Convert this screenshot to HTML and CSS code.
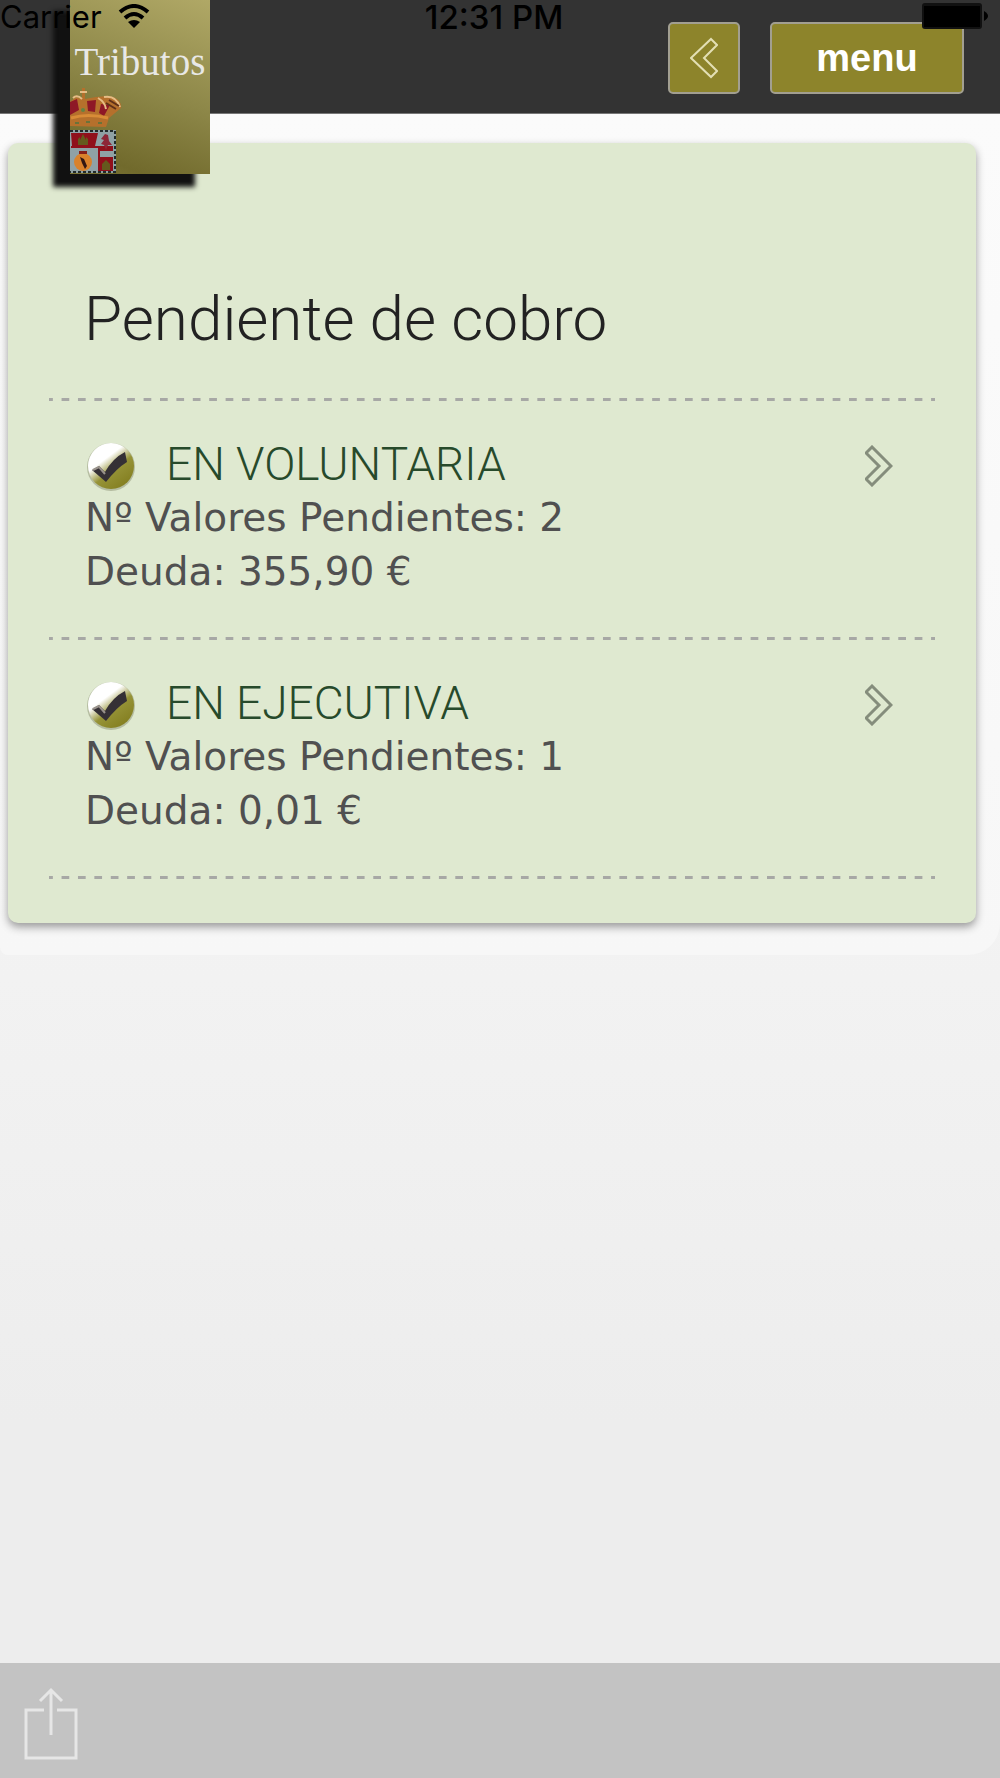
FILE: index.html
```
<!DOCTYPE html>
<html lang="es">
<head>
  <meta charset="UTF-8" />
  <title>Tributos</title>
  <meta name="viewport" content="width=device-width, initial-scale=1.0" />
  <link rel="stylesheet" href="styles.css">
</head>
<body>

  <!-- STATUS BAR -->
  <div class="statusbar">
    <span class="carrier">Carrier
      <svg class="wifi" viewBox="0 0 32 24" width="32" height="24">
        <path d="M2 8 Q16 -4 30 8" fill="none" stroke="#000" stroke-width="4"/>
        <path d="M7 14 Q16 6 25 14" fill="none" stroke="#000" stroke-width="4"/>
        <path d="M10 18 Q16 14 22 18 L16 24 Z"/>
      </svg>
    </span>
    <span class="time">12:31 PM</span>
    <svg class="battery" viewBox="0 0 66 26" width="66" height="26">
      <rect x="0" y="0" width="60" height="26" rx="3" fill="#111"/>
      <rect x="2" y="3" width="56" height="21"/>
      <path d="M62 8 Q70 13 62 18 Z"/>
    </svg>
  </div>

  <!-- HEADER -->
  <header class="header">
    <a class="logo" href="#">
      <span>Tributos</span>
      <svg class="escudo" viewBox="0 0 54 90" width="54" height="90">
        <!-- corona -->
        <path d="M0 42 V18 L6 13 L12 15 V4 H15 V15 L26 13 L38 12 Q52 14 51 24 L39 34 L36 43 Z" fill="#b5702c"/>
        <path d="M0 18 L7 15 L9 26 L0 31 Z M17 17 L26 16 L25 28 L18 27 Z M31 20 L40 21 L34 32 L29 29 Z" fill="#8e1826"/>
        <path d="M10 8 H17 M3 14 Q7 10 12 15 M28 14 Q35 18 36 25 M34 13 Q46 11 50 23" fill="none" stroke="#e6bd85" stroke-width="2"/>
        <path d="M36 19 L46 25 M39 16 L49 22" stroke="#603018" stroke-width="2"/>
        <path d="M1 34 Q18 29 38 34" fill="none" stroke="#d88c37" stroke-width="3"/>
        <circle cx="13" cy="26" r="2" fill="#628443"/>
        <path d="M5 39 h4 M16 38 h4 M28 39 h4" stroke="#69733a" stroke-width="2"/>
        <!-- cuarteles -->
        <rect x="0" y="46" width="46" height="43" fill="#8fa1a5"/>
        <path d="M0 47 H45 V88 H0" fill="none" stroke="#222b2b" stroke-width="2" stroke-dasharray="3 2"/>
        <path d="M1 49 H28 L25 62 H2 Z M29 62 H43 V87 H29 Z" fill="#90101b"/>
        <path d="M1 63 H29 V87" fill="none" stroke="#90101b" stroke-width="2"/>
        <path d="M8 61 V55 L10 53 V56 L13 50 L16 56 V53 L18 55 V61 Z M32 86 V80 L36 76 L40 80 V86 Z" fill="#65591d"/>
        <path d="M31 55 L35 50 L38 51 L39 57 L42 61 L38 61 L36 66 L34 61 L31 60 L34 56 Z" fill="#8d2637"/>
        <path d="M30 67 H43 V73 H30 Z" fill="#8fa1a5"/>
        <ellipse cx="13" cy="78" rx="9" ry="9" fill="#d9822b"/>
        <path d="M9 67 h8 v3 h-8 Z" fill="#862019"/>
        <path d="M10 73 L14 75 L17 82 L15 85 L12 79 Z" fill="#321712"/>
      </svg>
    </a>
    <button class="btn btn-back" aria-label="Volver">
      <svg viewBox="0 0 28 42" width="28" height="42">
        <path d="M21 2 L27 8 L14 21 L27 34 L21 40 L1 21 Z" fill="none" stroke="#e3dfb4" stroke-width="2"/>
      </svg>
    </button>
    <button class="btn btn-menu">menu</button>
  </header>

  <!-- CONTENT -->
  <main class="content">
    <section class="card">
      <h1>Pendiente de cobro</h1>
      <ul class="list">
        <li>
          <a class="item" href="#">
            <span class="item-title">
              <svg class="check" viewBox="0 0 50 50" width="50" height="50">
                <defs>
                  <linearGradient id="bola" x1="0.2" y1="0.1" x2="0.8" y2="0.9">
                    <stop offset="0.3" stop-color="#fff"/>
                    <stop offset="0.6" stop-color="#969337"/>
                    <stop offset="1" stop-color="#858022"/>
                  </linearGradient>
                </defs>
                <circle cx="26" cy="26" r="24" fill="#8c9171" opacity="0.5"/>
                <circle cx="26" cy="25" r="23" fill="url(#bola)"/>
                <path d="M7 29 L14 25 L20 31 Q28 17 40 11 L42 21 Q32 27 21 41 Z" fill="#353035"/>
                <path d="M8 29 L14 26 L20 33" fill="none" stroke="#99928c" stroke-width="2"/>
              </svg>
              EN VOLUNTARIA
            </span>
            <span class="item-text">Nº Valores Pendientes: 2</span>
            <span class="item-text">Deuda: 355,90 €</span>
            <svg class="arrow" viewBox="0 0 28 42" width="28" height="42">
              <path d="M7 2 L1 8 L14 21 L1 34 L7 40 L26 21 Z" fill="none" stroke="#858d7c" stroke-width="3"/>
            </svg>
          </a>
        </li>
        <li>
          <a class="item" href="#">
            <span class="item-title">
              <svg class="check" viewBox="0 0 50 50" width="50" height="50">
                <circle cx="26" cy="26" r="24" fill="#8c9171" opacity="0.5"/>
                <circle cx="26" cy="25" r="23" fill="url(#bola)"/>
                <path d="M7 29 L14 25 L20 31 Q28 17 40 11 L42 21 Q32 27 21 41 Z" fill="#353035"/>
                <path d="M8 29 L14 26 L20 33" fill="none" stroke="#99928c" stroke-width="2"/>
              </svg>
              EN EJECUTIVA
            </span>
            <span class="item-text">Nº Valores Pendientes: 1</span>
            <span class="item-text">Deuda: 0,01 €</span>
            <svg class="arrow" viewBox="0 0 28 42" width="28" height="42">
              <path d="M7 2 L1 8 L14 21 L1 34 L7 40 L26 21 Z" fill="none" stroke="#858d7c" stroke-width="3"/>
            </svg>
          </a>
        </li>
      </ul>
    </section>
  </main>

  <!-- TOOLBAR -->
  <footer class="toolbar">
    <button class="share" aria-label="Compartir">
      <svg viewBox="0 0 54 74" width="54" height="74">
        <path d="M20 23 H2 V71 H52 V23 H33 M27 48 V4 M16 14 L27 3 L38 14" fill="none" stroke="#e6e6e6" stroke-width="3"/>
      </svg>
    </button>
  </footer>

</body>
</html>
```
FILE: styles.css
```
* {
  box-sizing: border-box;
}
body {
  margin: 0;
  min-height: 100vh;
  display: flex;
  flex-direction: column;
  position: relative;
  background: linear-gradient(#f3f3f3 50%, #ededed 80%);
  font-family: "DejaVu Sans", sans-serif;
}

/* status bar */
.statusbar {
  position: absolute;
  top: 0;
  left: 0;
  right: 0;
  z-index: 2;
  height: 34px;
  display: flex;
  justify-content: space-between;
  padding-right: 12px;
  font-family: Inter, sans-serif;
  font-size: 31px;
  line-height: 34px;
  color: #000;
  pointer-events: none;
}
.carrier,
.battery {
  flex: none;
}
.wifi {
  margin-left: 8px;
}
.time {
  position: absolute;
  left: 0;
  right: 12px;
  text-align: center;
  font-size: 33px;
  font-weight: 500;
}
.battery {
  margin-top: 3px;
}

/* header */
.header {
  height: 114px;
  display: flex;
  align-items: flex-start;
  gap: 30px;
  padding: 22px 36px 0 70px;
  background: #333;
  border-bottom: 1px solid #777;
  position: relative;
}
.logo {
  width: 140px;
  height: 174px;
  margin: -22px auto 0 0;
  padding-top: 40px;
  display: flex;
  flex-direction: column;
  background: linear-gradient(200deg, #b0a866, #8d8748 50%, #716a2c 88%, #7c7537);
  box-shadow: -16px 12px 5px 1px #111;
  font-family: "Liberation Serif", serif;
  font-size: 39px;
  line-height: 44px;
  text-align: center;
  text-decoration: none;
  color: #e8e8e6;
}
.escudo {
  flex: none;
}
.btn {
  height: 72px;
  padding: 0;
  display: flex;
  align-items: center;
  justify-content: center;
  background: #8d842b;
  border: 2px solid #a29f91;
  border-radius: 5px;
  font-family: "Liberation Sans", sans-serif;
  font-size: 38px;
  font-weight: bold;
  color: #fff;
}
.btn-back {
  width: 72px;
}
.btn-menu {
  width: 194px;
}

/* content */
.content {
  padding: 29px 24px 32px 8px;
  background: linear-gradient(#fbfbfb, #f7f7f7);
  border-radius: 0 0 32px 8px;
}
.card {
  padding: 141px 41px 44px;
  background: #dfe9d0;
  border-radius: 10px;
  box-shadow: 0 4px 8px #999;
}
h1 {
  margin: 0;
  padding: 0 35px;
  font-family: Roboto, sans-serif;
  font-size: 62px;
  font-weight: 300;
  line-height: 70px;
  color: #222;
}
.list {
  margin: 44px 0 0;
  padding: 0;
  list-style: none;
}
/* dashed separators */
.list li,
.list {
  background: linear-gradient(90deg, #a7a8a5 25%, transparent 25% 75%, #a7a8a5 75%) 0 100% / calc(100% / 54) 3px repeat-x;
}
.list {
  padding-top: 3px;
  background-position: 0 0;
}
.item {
  position: relative;
  display: flex;
  flex-direction: column;
  padding: 36px 36px 41px;
  text-decoration: none;
}
.item-title {
  display: flex;
  align-items: center;
  gap: 31px;
  font-family: Roboto, sans-serif;
  font-size: 46px;
  font-weight: 300;
  line-height: 52px;
  color: #274a2b;
}
.check {
  margin-top: 4px;
  height: 50px;
}
.item-text {
  font-size: 39px;
  line-height: 54px;
  color: #505050;
}
.arrow {
  position: absolute;
  top: 44px;
  right: 42px;
}

/* toolbar */
.toolbar {
  height: 115px;
  margin-top: auto;
  padding: 24px;
  background: #c3c3c3;
}
.share {
  padding: 0;
  background: none;
  border: 0;
}
```
